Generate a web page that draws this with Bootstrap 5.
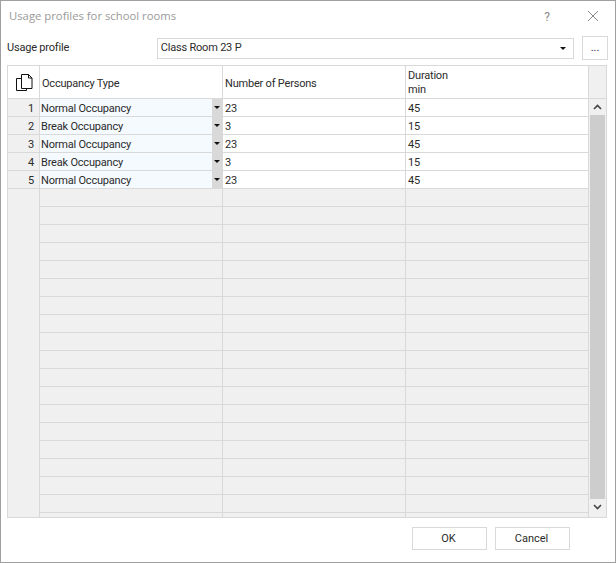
<!DOCTYPE html>
<html lang="en">
<head>
    <meta charset="UTF-8">
    <meta name="viewport" content="width=device-width, initial-scale=1.0">
    <title>Usage profiles for school rooms</title>
    <link href="https://cdn.jsdelivr.net/npm/bootstrap@5.3.0/dist/css/bootstrap.min.css" rel="stylesheet">
    <style>
        html, body { margin: 0; background: #fff; }
        body { font-family: Roboto, "Liberation Sans", sans-serif; font-size: 11px; letter-spacing: -0.2px; color: #2b2b2b; }
        .dlg-frame { width: 616px; height: 563px; border: 1px solid #a0a0a0; background: #fff; }
        .dlg-title { height: 34px; padding: 8px 0 0 8px; }
        .dlg-title-text { font-family: "Open Sans", sans-serif; font-size: 11.3px; letter-spacing: 0; line-height: 14px; color: #9a9a9a; }
        .dlg-ctrl { width: 46px; height: 14px; line-height: 14px; font-size: 12px; color: #8a8a8a; }
        .dlg-ctrl-box { margin-right: -1px; margin-top: 1px; }
        .profile-row { height: 30px; padding: 0 7px 3px 6px; }
        .profile-label { width: 150px; }
        .combo-box { width: 418px; height: 21px; border: 1px solid #d9d9d9; padding: 0 7px 0 3px; }
        .dots-btn { width: 26px; height: 24px; margin: 0 0 1px 8px; padding: 0; border: 1px solid #d9d9d9; border-radius: 0; font-size: 11px; line-height: 20px; color: #2b2b2b; }
        .grid-wrap { width: 600px; height: 453px; margin-left: 6px; border: 1px solid #d9d9d9; overflow: hidden; }
        .occ-grid { width: 581px; table-layout: fixed; border-collapse: separate; border-spacing: 0; flex: none; }
        .occ-grid th, .occ-grid td { padding: 2px 2px 0; height: 18px; line-height: 15px; font-weight: 400; font-size: 11px; color: #2b2b2b; border-width: 0 1px 1px 0; border-style: solid; border-color: #d9d9d9; background: #fff; box-shadow: none; vertical-align: middle; white-space: nowrap; }
        .occ-grid th { height: 33px; line-height: 14px; padding-top: 1px; }
        .occ-grid th.head-one { padding-top: 3px; }
        .occ-grid .row-no { background: #f0f0f0; text-align: right; padding-right: 5px; }
        .occ-grid .row-blank { background: #f0f0f0; padding: 0; }
        .occ-grid .row-side { border-bottom: 0; }
        .occ-grid .type-cell { background: #f5faff; padding: 0 0 0 1px; }
        .occ-grid .cut-row td { height: 4px; line-height: 0; border-bottom: 0; }
        .type-text { padding-top: 1px; }
        .drop-btn { width: 10px; height: 17px; background: #d9d9d9; }
        .drop-arrow { width: 0; height: 0; border-left: 3px solid transparent; border-right: 3px solid transparent; border-top: 3px solid #111; }
        .scroll-col { width: 17px; flex: none; }
        .scroll-head { height: 33px; background: #f0f0f0; border-bottom: 1px solid #d9d9d9; }
        .scroll-track { height: 418px; background: #f0f0f0; padding: 0 1px; }
        .scroll-btn { height: 16px; }
        .scroll-thumb { height: 384px; background: #cdcdcd; }
        .dlg-footer { padding: 9px 45px 0 0; }
        .dlg-btn { width: 75px; height: 23px; padding: 0 2px 1px 0; border: 1px solid #d9d9d9; border-radius: 0; font-size: 11px; line-height: 19px; color: #2b2b2b; background: #fff; }
    </style>
</head>
<body>
    <div class="dlg-frame d-flex flex-column">
        <div class="dlg-title d-flex justify-content-between">
            <span class="dlg-title-text">Usage profiles for school rooms</span>
            <div class="d-flex dlg-ctrl-box">
                <span class="dlg-ctrl text-center">?</span>
                <span class="dlg-ctrl text-center">
                    <svg width="12" height="12" viewBox="0 0 12 12" class="d-block mx-auto"><path d="M1 1 L11 11 M11 1 L1 11" stroke="#8a8a8a" fill="none"/></svg>
                </span>
            </div>
        </div>
        <div class="profile-row d-flex align-items-center">
            <span class="profile-label">Usage profile</span>
            <div class="combo-box d-flex align-items-center justify-content-between">
                <span>Class Room 23 P</span>
                <span class="drop-arrow"></span>
            </div>
            <button type="button" class="btn dots-btn">...</button>
        </div>
        <div class="grid-wrap d-flex">
            <table class="table mb-0 occ-grid">
                <colgroup>
                    <col style="width: 32px">
                    <col style="width: 183px">
                    <col style="width: 183px">
                    <col style="width: 183px">
                </colgroup>
                <thead>
                    <tr>
                        <th class="text-center">
                            <svg width="18" height="20" viewBox="0 0 18 20" class="d-block mx-auto">
                                <path d="M1.5 5.5 H6 M1.5 5.5 V17.5 H11.5 V15" fill="none" stroke="#111"/>
                                <path d="M6.5 1.5 H13.5 L17 5 V15.5 H6.5 Z M13.5 1.5 V5 H17" fill="#fff" stroke="#111"/>
                            </svg>
                        </th>
                        <th class="head-one">Occupancy Type</th>
                        <th class="head-one">Number of Persons</th>
                        <th>Duration<br>min</th>
                    </tr>
                </thead>
                <tbody>
                    <tr>
                        <td class="row-no">1</td>
                        <td class="type-cell"><div class="d-flex justify-content-between align-items-center"><span class="type-text">Normal Occupancy</span><span class="drop-btn d-flex align-items-center justify-content-center"><span class="drop-arrow"></span></span></div></td>
                        <td>23</td><td>45</td>
                    </tr>
                    <tr>
                        <td class="row-no">2</td>
                        <td class="type-cell"><div class="d-flex justify-content-between align-items-center"><span class="type-text">Break Occupancy</span><span class="drop-btn d-flex align-items-center justify-content-center"><span class="drop-arrow"></span></span></div></td>
                        <td>3</td><td>15</td>
                    </tr>
                    <tr>
                        <td class="row-no">3</td>
                        <td class="type-cell"><div class="d-flex justify-content-between align-items-center"><span class="type-text">Normal Occupancy</span><span class="drop-btn d-flex align-items-center justify-content-center"><span class="drop-arrow"></span></span></div></td>
                        <td>23</td><td>45</td>
                    </tr>
                    <tr>
                        <td class="row-no">4</td>
                        <td class="type-cell"><div class="d-flex justify-content-between align-items-center"><span class="type-text">Break Occupancy</span><span class="drop-btn d-flex align-items-center justify-content-center"><span class="drop-arrow"></span></span></div></td>
                        <td>3</td><td>15</td>
                    </tr>
                    <tr>
                        <td class="row-no">5</td>
                        <td class="type-cell"><div class="d-flex justify-content-between align-items-center"><span class="type-text">Normal Occupancy</span><span class="drop-btn d-flex align-items-center justify-content-center"><span class="drop-arrow"></span></span></div></td>
                        <td>23</td><td>45</td>
                    </tr>
                    <tr><td class="row-blank row-side" rowspan="19"></td><td class="row-blank"></td><td class="row-blank"></td><td class="row-blank"></td></tr>
                    <tr><td class="row-blank"></td><td class="row-blank"></td><td class="row-blank"></td></tr>
                    <tr><td class="row-blank"></td><td class="row-blank"></td><td class="row-blank"></td></tr>
                    <tr><td class="row-blank"></td><td class="row-blank"></td><td class="row-blank"></td></tr>
                    <tr><td class="row-blank"></td><td class="row-blank"></td><td class="row-blank"></td></tr>
                    <tr><td class="row-blank"></td><td class="row-blank"></td><td class="row-blank"></td></tr>
                    <tr><td class="row-blank"></td><td class="row-blank"></td><td class="row-blank"></td></tr>
                    <tr><td class="row-blank"></td><td class="row-blank"></td><td class="row-blank"></td></tr>
                    <tr><td class="row-blank"></td><td class="row-blank"></td><td class="row-blank"></td></tr>
                    <tr><td class="row-blank"></td><td class="row-blank"></td><td class="row-blank"></td></tr>
                    <tr><td class="row-blank"></td><td class="row-blank"></td><td class="row-blank"></td></tr>
                    <tr><td class="row-blank"></td><td class="row-blank"></td><td class="row-blank"></td></tr>
                    <tr><td class="row-blank"></td><td class="row-blank"></td><td class="row-blank"></td></tr>
                    <tr><td class="row-blank"></td><td class="row-blank"></td><td class="row-blank"></td></tr>
                    <tr><td class="row-blank"></td><td class="row-blank"></td><td class="row-blank"></td></tr>
                    <tr><td class="row-blank"></td><td class="row-blank"></td><td class="row-blank"></td></tr>
                    <tr><td class="row-blank"></td><td class="row-blank"></td><td class="row-blank"></td></tr>
                    <tr><td class="row-blank"></td><td class="row-blank"></td><td class="row-blank"></td></tr>
                    <tr class="cut-row"><td class="row-blank"></td><td class="row-blank"></td><td class="row-blank"></td></tr>
                </tbody>
            </table>
            <div class="scroll-col">
                <div class="scroll-head"></div>
                <div class="scroll-track">
                    <div class="scroll-btn d-flex align-items-center justify-content-center">
                        <svg width="9" height="6" viewBox="0 0 9 6"><path d="M1 5 L4.5 1.5 L8 5" fill="none" stroke="#444" stroke-width="1.6"/></svg>
                    </div>
                    <div class="scroll-thumb"></div>
                    <div class="scroll-btn d-flex align-items-center justify-content-center">
                        <svg width="9" height="6" viewBox="0 0 9 6"><path d="M1 1 L4.5 4.5 L8 1" fill="none" stroke="#444" stroke-width="1.6"/></svg>
                    </div>
                </div>
            </div>
        </div>
        <div class="dlg-footer d-flex justify-content-end gap-2">
            <button type="button" class="btn dlg-btn">OK</button>
            <button type="button" class="btn dlg-btn">Cancel</button>
        </div>
    </div>

    <script src="https://cdn.jsdelivr.net/npm/bootstrap@5.3.0/dist/js/bootstrap.bundle.min.js"></script>
</body>
</html>
